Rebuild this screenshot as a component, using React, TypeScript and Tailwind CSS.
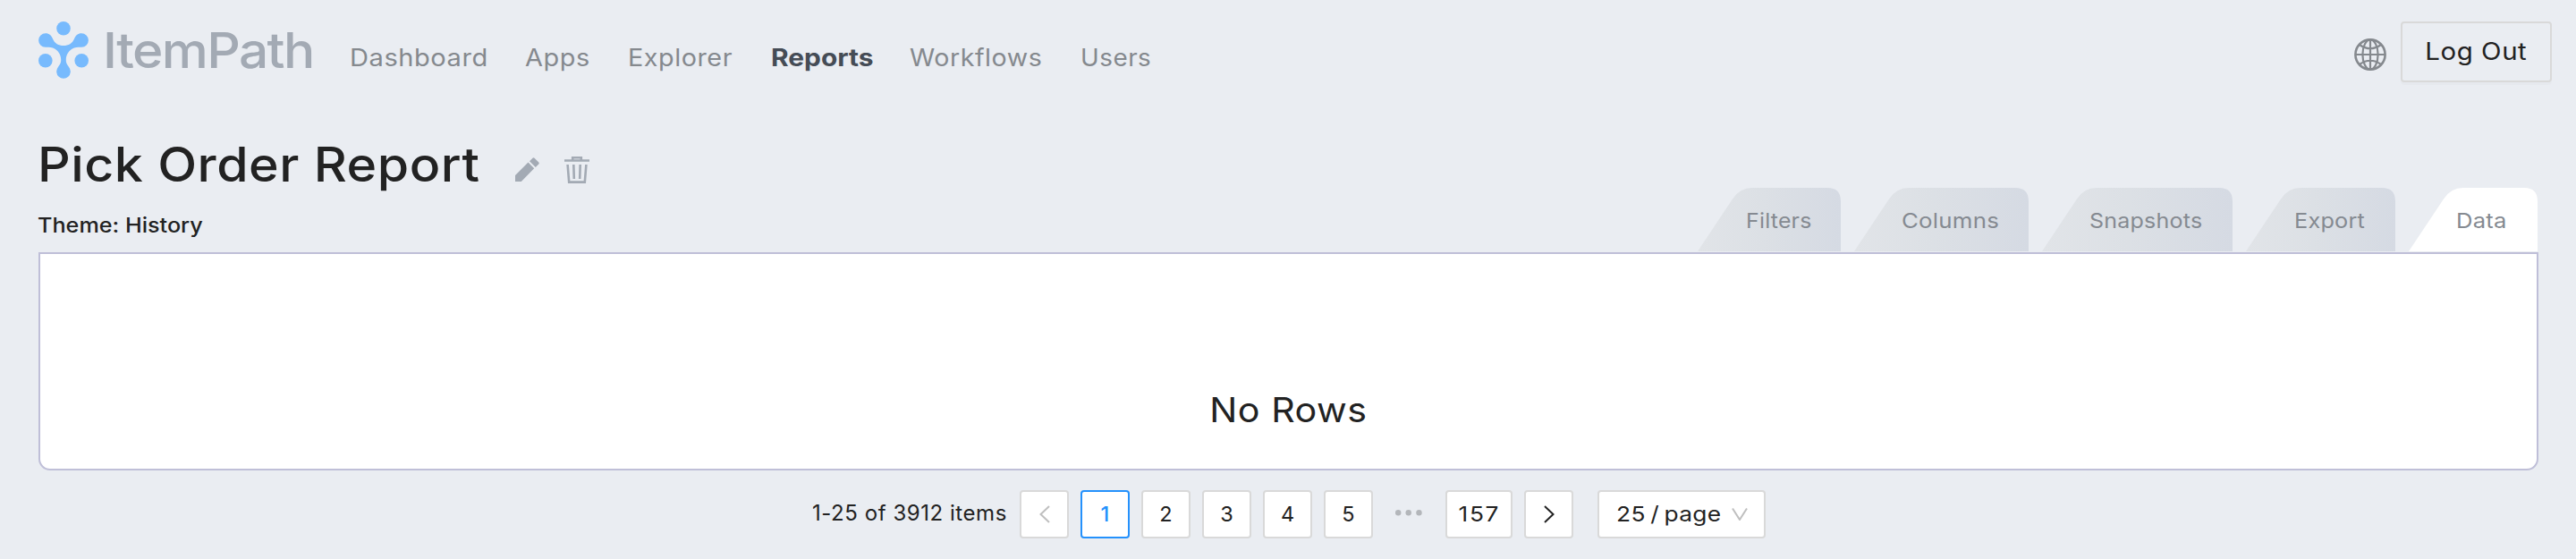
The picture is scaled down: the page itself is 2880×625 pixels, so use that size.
import React from "react";

const navItems = [
  { label: "Dashboard", box: "w-[196px]", text: "scale-x-[1.077]" },
  { label: "Apps", box: "w-[115px]", text: "scale-x-[1.07]" },
  { label: "Explorer", box: "w-[160px]", text: "scale-x-[1.065]" },
  { label: "Reports", box: "w-[155px]", text: "scale-x-[1.107] font-bold tracking-[0px] text-[#454c56]" },
  { label: "Workflows", box: "w-[191px]", text: "scale-x-[1.06]" },
  { label: "Users", box: "w-[100px]", text: "scale-x-[1.03]" },
];

const tabs = [
  { label: "Filters", w: 160, text: "ml-[54px] scale-x-[1.06]" },
  { label: "Columns", w: 195, text: "ml-[53px] scale-x-[1.1]" },
  { label: "Snapshots", w: 213, text: "ml-[53px] scale-x-[1.065]" },
  { label: "Export", w: 167, text: "ml-[54px] scale-x-[1.075]" },
  { label: "Data", w: 144, text: "ml-[53px] scale-x-[1.09]", active: true },
];

function Logo() {
  return (
    <svg className="h-[64px] w-[56px] shrink-0" viewBox="0 0 56 64" fill="#77bafd">
      <circle cx="28" cy="7.8" r="7.8" />
      <circle cx="7.8" cy="43.8" r="7.8" />
      <circle cx="48.2" cy="43.8" r="7.8" />
      <path d="M8 13.2C12 13.2 14.6 15.8 15.9 19.2C18 24.5 22.5 27 28 27C33.5 27 38 24.500 40.1 19.2C41.4 15.8 44 13.2 48 13.2A7.8 7.8 0 0 1 48.2 28.8C46 28.8 43 28.2 40 29.5C34 32 30.8 37 30.8 43C30.8 47 32.5 48.500 34.2 51.2A7.8 7.8 0 1 1 21.8 51.2C23.5 48.5 25.2 47 25.2 43C25.2 37 22 32 16 29.5C13 28.2 10 28.8 7.8 28.8A7.8 7.8 0 0 1 8 13.2Z" />
    </svg>
  );
}

function Tab({ label, w, text, active }: { label: string; w: number; text: string; active?: boolean }) {
  return (
    <button className="relative h-[71px] text-left" style={{ width: w }}>
      <svg className="absolute inset-0" width={w} height="71">
        <defs>
          <linearGradient id={label} x1="0" x2="1" y1="0" y2="0">
            <stop offset="0" stopColor="#e1e4e8" />
            <stop offset="0.45" stopColor="#dce0e5" />
            <stop offset="1" stopColor="#d5dae3" />
          </linearGradient>
        </defs>
        <path
          d={`M0 71L39 12.5Q47 0 61 0H${w - 15}Q${w} 0 ${w} 15V71Z`}
          fill={active ? "#fff" : `url(#${label})`}
        />
      </svg>
      <span className={`relative block origin-left text-[23.5px] leading-[74px] tracking-[0.2px] text-[#858a91] ${text}`}>
        {label}
      </span>
    </button>
  );
}

function PageBox({ children, className = "" }: { children: React.ReactNode; className?: string }) {
  return (
    <button
      className={`flex h-[54px] items-center justify-center rounded-[4px] border-2 bg-white text-[23.5px] ${className}`}
    >
      {children}
    </button>
  );
}

export default function App() {
  return (
    <div className="h-[625px] w-[2880px] overflow-hidden bg-[#eaedf2] font-['Inter','Liberation_Sans',sans-serif] text-[#222]">
      <header className="flex h-[112px] items-start pl-[43px] pr-[27px]">
        <div className="flex w-[348px] pt-[24px]">
          <Logo />
          <span className="ml-[16px] mt-[-1px] origin-left scale-x-[1.065] text-[55px] font-medium leading-[66px] tracking-[-1.5px] text-[#a3aab4]">
            ItemPath
          </span>
        </div>
        <nav className="flex pt-[45px] text-[27px] leading-[40px] tracking-[0.5px] text-[#85898e]">
          {navItems.map((n) => (
            <a key={n.label} className={n.box}>
              <span className={`inline-block origin-left ${n.text}`}>{n.label}</span>
            </a>
          ))}
        </nav>
        <div className="ml-auto flex pt-[24px]">
          <svg className="mr-[16px] mt-[19px] h-[36px] w-[36px]" viewBox="0 0 36 36" fill="none" stroke="#85898e" strokeWidth="2.2">
            <circle cx="18" cy="18" r="16.6" strokeWidth="2.6" />
            <ellipse cx="18" cy="18" rx="8.6" ry="16.6" />
            <path d="M18 1V35M1 18H35M6 7Q18 15.5 30 7M6 29Q18 20.5 30 29" />
          </svg>
          <button className="h-[68px] w-[169px] rounded-[4px] border-2 border-[#d9d9d9] text-[27px] tracking-[0.5px] shadow-[0_3px_0_rgba(0,0,0,0.016)]">
            <span className="inline-block scale-x-[1.09]">Log Out</span>
          </button>
        </div>
      </header>

      <section className="flex h-[170px] items-start justify-between pl-[43px] pr-[43px]">
        <div>
          <div className="flex h-[110px] pt-[40px]">
            <h1 className="w-[533px] origin-left whitespace-nowrap text-[53px] font-medium leading-[64px] tracking-[0.5px]">
              <span className="-ml-px inline-block origin-left scale-x-[1.08]">Pick Order Report</span>
            </h1>
            <svg className="mt-[24px] h-[27px] w-[27px]" viewBox="0 0 27 27" fill="#a3aab4">
              <path d="M0 20L14.5 5.6L21.2 12.3L6.8 27H0ZM16 4.200L19.500 0.700Q20.500 -0.200 21.500 0.700L26.300 5.500Q27.200 6.500 26.300 7.500L22.800 10.900Z" />
            </svg>
            <svg className="ml-[28px] mt-[23px] h-[30px] w-[28px]" viewBox="0 0 28 30" fill="none" stroke="#a3aab4" strokeWidth="2.6">
              <path d="M0 4.5H28M9.200 4.5V1.300H18.800V4.5M3.6 9L5.2 28.600H22.800L24.400 9M10.300 9L10.800 25M17.700 9L17.200 25" />
            </svg>
          </div>
          <p className="-ml-px origin-left scale-x-[1.095] text-[23px] font-medium leading-[60px]">Theme: History</p>
        </div>
        <div className="flex gap-[15px] pt-[98px]">
          {tabs.map((t) => (
            <Tab key={t.label} {...t} />
          ))}
        </div>
      </section>

      <main className="ml-[43px] mr-[42px] flex h-[244px] justify-center rounded-b-[13px] border-2 border-[#bfbfd8] bg-white pt-[148px] text-[38.5px] leading-[52px] tracking-[0.5px]">
        <span className="scale-x-[1.07]">No Rows</span>
      </main>

      <footer className="flex h-[76px] pl-[908px] pt-[22px]">
        <span className="w-[232px] whitespace-nowrap text-[24px] leading-[51px] tracking-[0.55px]">1-25 of 3912 items</span>
        <div className="flex gap-[13px]">
          <PageBox className="w-[55px] border-[#d9d9d9]">
            <svg width="12" height="20" viewBox="0 0 12 20" fill="none" stroke="#bfbfbf" strokeWidth="2"><path d="M11 1L1.5 10L11 19" /></svg>
          </PageBox>
          <PageBox className="w-[55px] border-[#2491fc] font-medium text-[#2491fc]">1</PageBox>
          {["2", "3", "4", "5"].map((p) => (
            <PageBox key={p} className="w-[55px] border-[#d9d9d9]">{p}</PageBox>
          ))}
          <svg className="h-[54px] w-[55px]" viewBox="0 0 55 54" fill="#b3b6ba">
            <circle cx="15.2" cy="25.3" r="3.2" />
            <circle cx="26.7" cy="25.3" r="3.2" />
            <circle cx="38.5" cy="25.3" r="3.2" />
          </svg>
          <PageBox className="w-[75px] border-[#d9d9d9] tracking-[1.5px]">
            <span className="scale-x-[1.12]">157</span>
          </PageBox>
          <PageBox className="w-[55px] border-[#d9d9d9]">
            <svg width="12" height="20" viewBox="0 0 12 20" fill="none" stroke="#222" strokeWidth="2"><path d="M1 1L10.5 10L1 19" /></svg>
          </PageBox>
        </div>
        <PageBox className="ml-[27px] w-[188px] justify-start border-[#d9d9d9] pl-[19px]">
          <span className="w-[129px] origin-left scale-x-[1.12] whitespace-nowrap text-left tracking-[0.3px] [word-spacing:-2px]">
            25 / page
          </span>
          <svg width="18" height="14" viewBox="0 0 18 14" fill="none" stroke="#bfbfbf" strokeWidth="2"><path d="M1 0.5L9 13L17 0.5" /></svg>
        </PageBox>
      </footer>
    </div>
  );
}
